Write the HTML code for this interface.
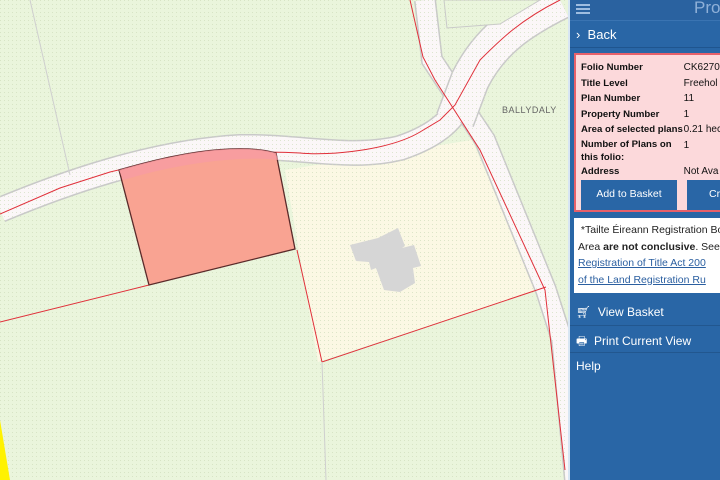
<!DOCTYPE html>
<html><head><meta charset="utf-8"><style>
*{margin:0;padding:0;box-sizing:border-box}
body{width:720px;height:480px;overflow:hidden;position:relative;font-family:"Liberation Sans",sans-serif;background:#eaf5dc}
#map{position:absolute;left:0;top:0}
#side{position:absolute;left:568px;top:0;width:152px;height:480px;background:#2966a6;border-left:2px solid #d8e6f3;color:#fff}
.hdr{height:21px;background:#2a62a0;position:relative;border-bottom:1px solid #3a74b2}
.ham{position:absolute;left:6px;top:2px;width:14px}
.ham i{display:block;height:2px;background:#9fbde0;margin:2px 0 2px}
.hdr span{position:absolute;left:124px;top:-2px;font-size:17px;color:#8fb0d8}
.back{height:27px;font-size:13px;padding:6px 0 0 6px;border-bottom:1px solid #1f558f}
.info{position:absolute;left:4px;top:53px;width:150px;height:159px;background:#fcd9db;border:2px solid #e7606a;color:#111;font-size:10px}
.info table{border-collapse:collapse;margin:5px 0 0 5px}
.info td{padding:0;line-height:15.5px;vertical-align:top;white-space:nowrap}
.info td.k{font-weight:bold;width:106px;font-size:9.6px}
.btn{position:absolute;top:125px;height:30px;background:#2966a6;color:#fff;font-size:10.5px;text-align:center;line-height:29px}
.note{position:absolute;left:4px;top:218px;width:150px;height:75px;background:#fff;color:#222;font-size:10.5px;line-height:16.5px;padding:4px 0 0 4px;white-space:nowrap;overflow:hidden}
.note a{color:#2b5fa0;text-decoration:underline}
.item{position:absolute;left:0;width:152px;height:27px;font-size:12px;padding:6px 0 0 6px;border-bottom:1px solid #22578f}
</style></head><body>
<svg id="map" width="570" height="480" viewBox="0 0 570 480">
<defs><pattern id="dots" width="4" height="4" patternUnits="userSpaceOnUse"><rect width="1" height="1" fill="#c9d9b6" opacity=".6"/></pattern></defs>
<rect width="570" height="480" fill="#eaf5dc"/>
<polygon points="285,170 472,140 537,290 318,362" fill="#fbf8e4"/>
<path d="M0,210 C60,185 150,152 240,147 C300,146 350,160 400,148 C430,138 448,125 458,108" fill="none" stroke="#c9c9c9" stroke-width="26"/>
<path d="M0,210 C60,185 150,152 240,147 C300,146 350,160 400,148 C430,138 448,125 458,108" fill="none" stroke="#fbf7f8" stroke-width="23"/>
<path d="M425,0 L432,60 L465,110 L485,140 L546,290 L562,340 L575,480" fill="none" stroke="#c9c9c9" stroke-width="22"/>
<path d="M425,0 L432,60 L465,110 L485,140 L546,290 L562,340 L575,480" fill="none" stroke="#fbf7f8" stroke-width="19"/>
<path d="M560,0 C520,20 490,40 470,80 L455,120" fill="none" stroke="#c9c9c9" stroke-width="40"/>
<path d="M560,0 C520,20 490,40 470,80 L455,120" fill="none" stroke="#fbf7f8" stroke-width="37"/>
<polygon points="444,0 447,28 500,24 540,0" fill="#eaf5dc" stroke="#c9c9c9"/>
<rect width="570" height="480" fill="url(#dots)"/>
<g fill="none" stroke="#e0303a" stroke-width="1">
<path d="M410,0 L423,57 L435,80 L453,108 L480,150 L545,290 L565,470"/>
<path d="M560,0 C520,20 500,40 480,60 L455,105 L440,120 L420,132 C390,150 330,156 300,153 C250,150 180,155 110,172 L60,188 L0,214"/>
<path d="M0,322 L149,285"/>
<path d="M297,250 L322,362 L537,290 L546,287"/>
</g>
<line x1="30" y1="0" x2="70" y2="175" stroke="#cfcfcf"/>
<line x1="322" y1="362" x2="326" y2="480" stroke="#cfcfcf"/>
<path d="M119,170 C160,158 200,150 230,149 C250,148 265,150 276,153 L295,249 L149,285 Z" fill="#f9a392" stroke="#5a2a2a" stroke-width="1.3"/>
<path d="M119,170 C160,158 200,150 230,149 C250,148 265,150 276,153 L278,160 C250,156 190,160 123,180 Z" fill="#f79ba3" opacity=".8"/>
<polygon points="350,245 378,238 398,228 405,246 402,248 414,245 421,266 413,268 415,283 400,292 384,290 376,268 371,270 369,262 356,261" fill="#d6d6d6"/>
<polygon points="0,420 10,480 0,480" fill="#fff200"/>
<text x="502" y="113" font-family="Liberation Sans" font-size="9" fill="#666" letter-spacing="0.5">BALLYDALY</text>
</svg>
<div id="side">
<div class="hdr"><div class="ham"><i></i><i></i><i></i></div><span>Prop</span></div>
<div class="back">›&nbsp;&nbsp;Back</div>
<div class="info"><table>
<tr><td class="k">Folio Number</td><td>CK6270</td></tr>
<tr><td class="k">Title Level</td><td>Freehol</td></tr>
<tr><td class="k">Plan Number</td><td>11</td></tr>
<tr><td class="k">Property Number</td><td>1</td></tr>
<tr><td class="k">Area of selected plans</td><td>0.21 hec</td></tr>
<tr><td class="k" style="line-height:13px">Number of Plans on<br>this folio:</td><td>1</td></tr>
<tr><td class="k">Address</td><td>Not Ava</td></tr>
</table>
<div class="btn" style="left:5px;width:96px">Add to Basket</div>
<div class="btn" style="left:111px;width:40px;text-align:left;padding-left:22px">Cr</div>
</div>
<div class="note">&nbsp;*Tailte Éireann Registration Bou<br>Area <b>are not conclusive</b>. See <a>S</a><br><a>Registration of Title Act 200</a><br><a>of the Land Registration Ru</a></div>
<div class="item" style="top:299px">🛒&#xFE0E;&nbsp; View Basket</div>
<div class="item" style="top:326px">🖶&nbsp; Print Current View</div>
<div class="item" style="top:353px;border:none">Help</div>
</div>
</body></html>
